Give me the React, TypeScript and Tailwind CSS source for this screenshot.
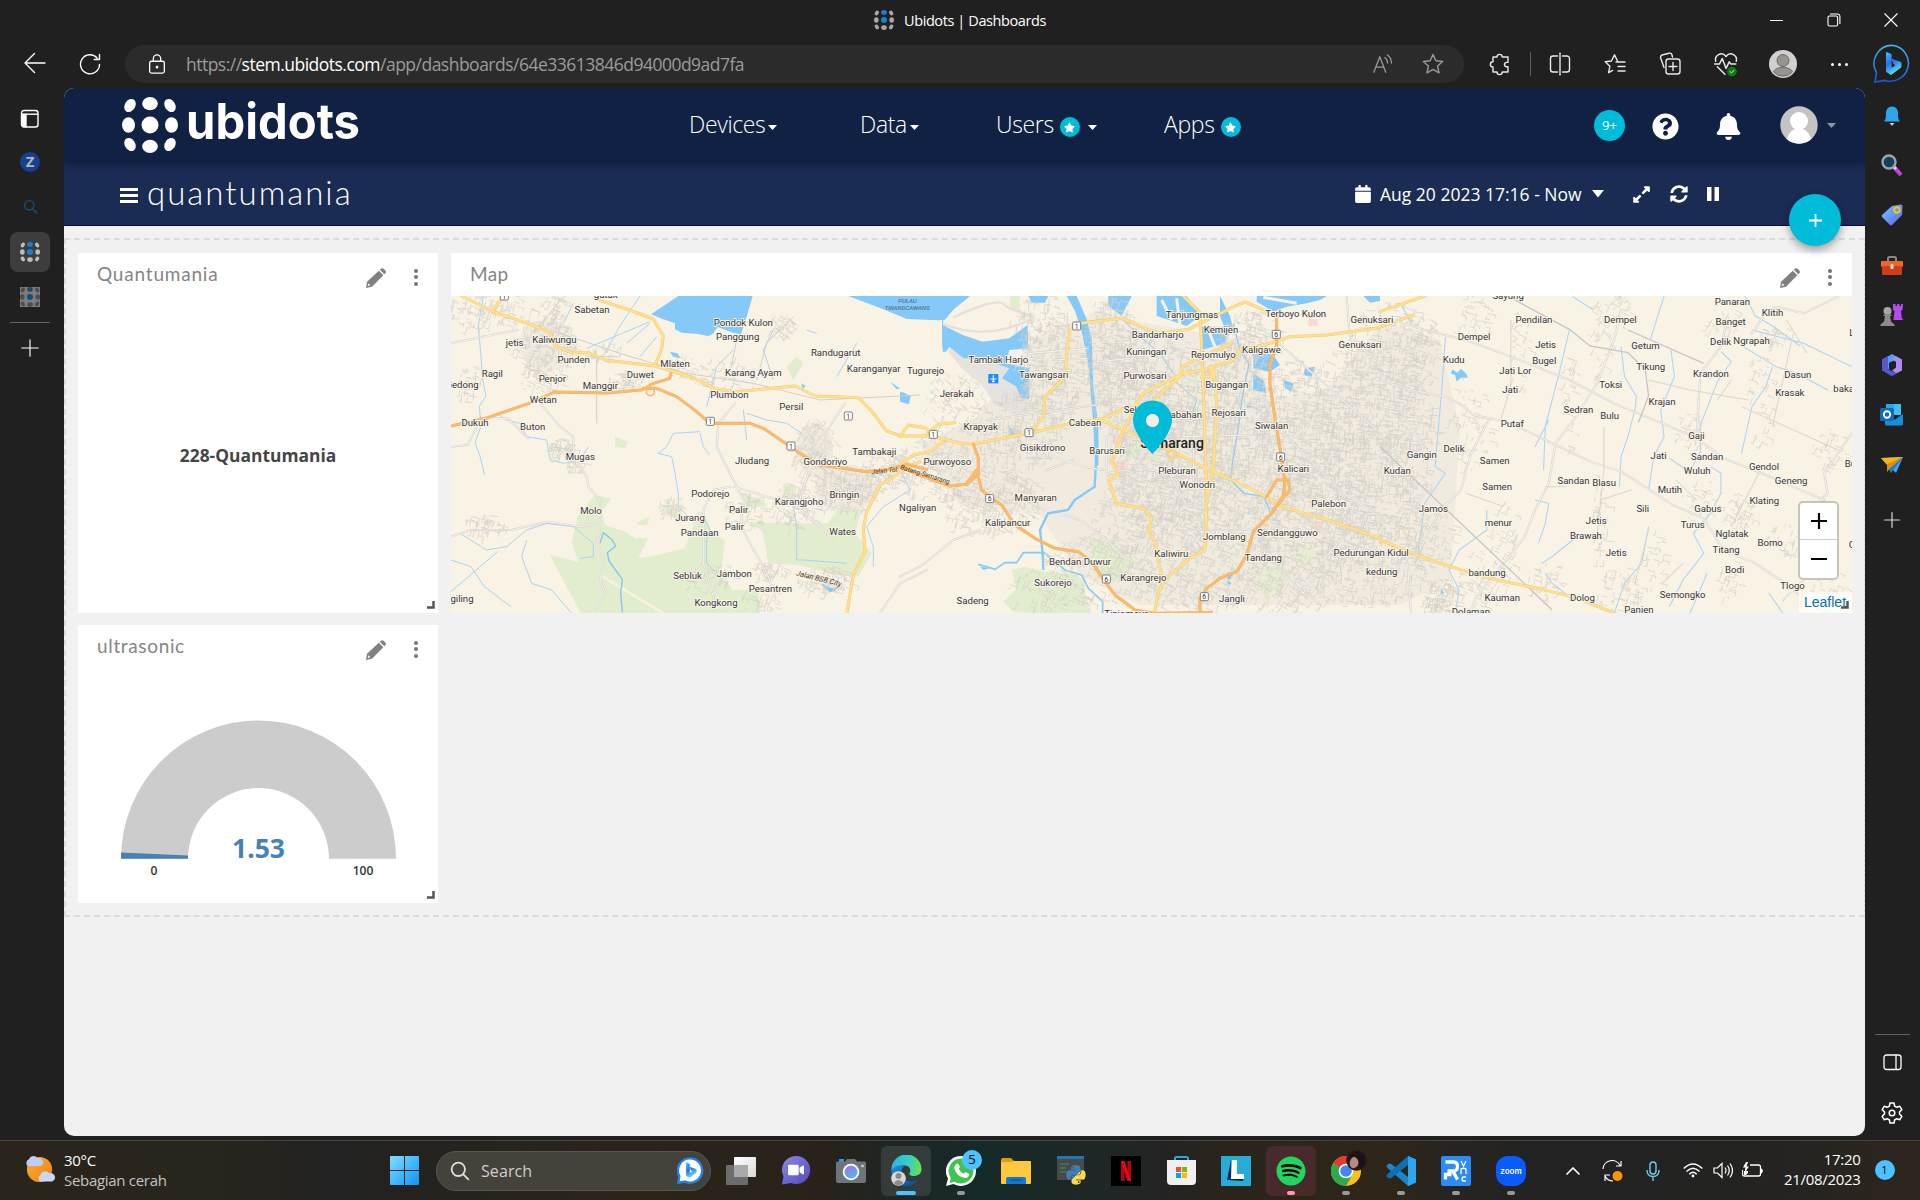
import React from "react";
import {
  FaCalendar, FaExpandAlt, FaBell, FaQuestionCircle, FaStar,
  FaSpotify, FaPython, FaSyncAlt, FaVideo,
} from "react-icons/fa";

/* ---------- shared pieces ---------- */

function UbiDots({ className, side, mid, low = side }: { className: string; side: string; mid: string; low?: string }) {
  return (
    <svg className={className} viewBox="0 0 56 56">
      <g fill={side}>
        <ellipse cx="8" cy="8.5" rx="5.2" ry="7" transform="rotate(32 8 8.5)" />
        <ellipse cx="48" cy="8.5" rx="5.2" ry="7" transform="rotate(-32 48 8.5)" />
        <ellipse cx="6.5" cy="28" rx="6.5" ry="7.7" />
        <ellipse cx="49.5" cy="28" rx="6.5" ry="7.7" />
        <ellipse cx="8" cy="47.5" rx="5.2" ry="7" transform="rotate(-32 8 47.5)" />
        <ellipse cx="48" cy="47.5" rx="5.2" ry="7" transform="rotate(32 48 47.5)" />
      </g>
      <ellipse cx="28" cy="6.7" rx="7.8" ry="6.6" fill={mid} />
      <circle cx="28" cy="28" r="8.5" fill={mid} />
      <ellipse cx="28" cy="49.3" rx="7.8" ry="6.6" fill={low} />
    </svg>
  );
}

function Line({ children, size = 24, color = "#e8e8e8", w = 1.4, className = "" }: { children: React.ReactNode; size?: number; color?: string; w?: number; className?: string }) {
  return (
    <svg className={className} width={size} height={size} viewBox="0 0 24 24" fill="none" stroke={color} strokeWidth={w} strokeLinecap="round" strokeLinejoin="round">
      {children}
    </svg>
  );
}

function BingMark({ id }: { id: string }) {
  return (
    <>
      <defs>
        <linearGradient id={id} x1="0" y1="0" x2="0.4" y2="1">
          <stop offset="0" stopColor="#37bdff" />
          <stop offset="0.5" stopColor="#2a6cf0" />
          <stop offset="1" stopColor="#5ce1e6" />
        </linearGradient>
      </defs>
      <path d="M14 8.500l4.600 1.800v14.200l5.200-3.300-2.600-1.400-1.800-4.600 9 3.300v4.600L18.600 30.500 14 27.600z" fill={`url(#${id})`} stroke={`url(#${id})`} strokeWidth="1" strokeLinejoin="round" />
    </>
  );
}

/* ---------- browser chrome ---------- */

function TitleBar() {
  return (
    <div className="flex h-[45px] items-start">
      <div className="ml-[874px] flex h-10 w-[873px] items-center gap-[10px] text-[14.5px] text-white">
        <UbiDots className="h-5 w-5" side="#a8a8a8" mid="#1583d2" low="#a8a8a8" />
        <span className="mt-px whitespace-nowrap tracking-[-0.4px]">Ubidots | Dashboards</span>
      </div>
      <div className="flex h-10 items-center text-white">
        <span className="flex w-[58px] justify-center"><span className="h-px w-[13px] bg-white" /></span>
        <span className="flex w-[57px] justify-center">
          <svg width="14" height="14" viewBox="0 0 14 14" fill="none" stroke="#fff" strokeWidth="1.1"><rect x="1" y="3" width="9.6" height="10" rx="1.5" /><path d="M3 1h7.500a2.400 2.400 0 0 1 2.400 2.400V11" /></svg>
        </span>
        <span className="flex w-[58px] justify-center">
          <svg width="14" height="14" viewBox="0 0 14 14" stroke="#fff" strokeWidth="1.1"><path d="M.5.5l13 13M13.500.5l-13 13" /></svg>
        </span>
      </div>
    </div>
  );
}

function ToolBar() {
  return (
    <div className="flex h-[43px] items-start">
      <div className="flex h-[38px] w-[125px] items-center">
        <span className="ml-[23px] flex w-6 justify-center"><Line size={24} w={1.4} color="#fff"><path d="M22 11H2.500M11.500 1.500l-9.500 9.500 9.500 9.500" /></Line></span>
        <span className="ml-[31px] flex w-6 justify-center"><Line size={24} w={1.4} color="#fff"><path d="M21.500 12.500a9.500 9.500 0 1 1-2.300-6.400M21.500 2.500v5h-5.300" /></Line></span>
      </div>
      <div className="flex h-[38px] w-[1339px] items-center rounded-full bg-[#2b2b2b]">
        <Line className="ml-[21px]" size={22} color="#fff"><rect x="4" y="9" width="16" height="13" rx="2" /><path d="M8 9V6a4 4 0 0 1 8 0v3" /><circle cx="12" cy="15.500" r=".8" fill="#fff" /></Line>
        <span className="ml-[18px] w-[1167px] whitespace-nowrap text-[17.5px] tracking-[-0.51px] text-[#9b9b9b]">
          https://<span className="text-white">stem.ubidots.com</span>/app/dashboards/64e33613846d94000d9ad7fa
        </span>
        <Line className="ml-[19px]" size={22} color="#9a9a9a"><path d="M2 21L8.500 4 15 21M4.300 15.500h8.500M14 5c2 1.500 3 3.500 3 6M16.500 2c3 2 4.700 5 4.700 9" /></Line>
        <Line className="ml-[27px]" size={24} color="#9a9a9a"><path d="M12 2.500l2.900 6.200 6.700.8-5 4.600 1.400 6.700-6-3.400-6 3.400 1.400-6.700-5-4.600 6.700-.8z" /></Line>
      </div>
      <div className="flex h-[38px] items-center">
        <Line className="ml-[24px]" size={24}><path d="M9 5a2.600 2.600 0 0 1 5.200 0H20v5.400h-1.300a2.200 2.200 0 0 0 0 4.400H20V20h-5.800a2.600 2.600 0 0 1-5.200 0H5v-5a2.600 2.600 0 0 1 0-5.200V5z" /></Line>
        <span className="ml-[18px] h-6 w-px bg-[#5c5c5c]" />
        <Line className="ml-[17px]" size={24}><path d="M9.500 4H5a2.500 2.500 0 0 0-2.500 2.500v11A2.500 2.500 0 0 0 5 20h4.500M14.500 4H19a2.500 2.500 0 0 1 2.500 2.500v11A2.500 2.500 0 0 1 19 20h-4.500M12 1v22" /></Line>
        <Line className="ml-[31px]" size={24}><path d="M14.500 9L11.500 2.800 8.500 9l-6.300.8 4.700 4.400-1.300 6.500 4-2.300M13 10h9M15 14.500h7M15 19h7" /></Line>
        <Line className="ml-[31px]" size={24}><path d="M6 15.500L2.500 5.500A2.500 2.500 0 0 1 4 3l7-1.800A2.500 2.500 0 0 1 14 3l.5 2M8 20V9.500A2.500 2.500 0 0 1 10.500 7h9A2.500 2.500 0 0 1 22 9.500v10a2.500 2.500 0 0 1-2.500 2.500h-9A2.500 2.500 0 0 1 8 19.500M15 10.500v8M11 14.500h8" /></Line>
        <Line className="ml-[31px]" size={26}><path d="M2.500 9.500C1 4 8 0 12 5c4-5 11-1 9.500 4.500M1.500 12H6l2.500-5 3.500 9 3-6 1.500 2H21M4 14.500l7 7" /><circle cx="17.500" cy="19" r="4.500" fill="#107c10" stroke="none" /><path d="M15.700 19l1.300 1.300 2.300-2.500" strokeWidth="1" stroke="#8fd08f" /></Line>
        <svg className="ml-[30px]" width="28" height="28" viewBox="0 0 28 28">
          <circle cx="14" cy="14" r="14" fill="#d2d0ce" />
          <path d="M4.500 22a9.600 5.500 0 0 1 19 0A13 13 0 0 1 4.500 22z" fill="#97948f" stroke="#5b5a58" strokeWidth=".8" />
          <circle cx="14" cy="10.500" r="6" fill="#97948f" stroke="#5b5a58" strokeWidth=".8" />
        </svg>
        <span className="ml-[34px] flex w-[17px] justify-between"><i className="size-[3px] rounded-full bg-white" /><i className="size-[3px] rounded-full bg-white" /><i className="size-[3px] rounded-full bg-white" /></span>
        <svg className="ml-[25px]" width="40" height="40" viewBox="0 0 40 40">
          <defs><linearGradient id="bubble" x1="0" y1="0" x2="0" y2="1"><stop offset="0" stopColor="#45b8e6" /><stop offset="1" stopColor="#1758d8" /></linearGradient></defs>
          <path d="M20.500 1.500A18 18 0 1 1 12 36.400L2 38l1.500-9.500A18 18 0 0 1 20.500 1.500z" fill="none" stroke="url(#bubble)" strokeWidth="1.600" />
          <g transform="translate(-.5 0)"><BingMark id="bingTop" /></g>
        </svg>
      </div>
    </div>
  );
}

function LeftRail() {
  return (
    <aside className="flex w-16 flex-col pl-[10px]">
      <div className="flex h-[51px] w-[39px] items-center justify-center pt-[11px]">
        <svg width="20" height="20" viewBox="0 0 20 20" fill="none" stroke="#fff" strokeWidth="1.400"><rect x="1.500" y="1.500" width="16.500" height="16.500" rx="2.500" /><path d="M1.500 5.200h16.500" /><path d="M2 5.500h4v12H3.500L2 16z" fill="#fff" /></svg>
      </div>
      <div className="flex h-[45px] w-10 items-center justify-center">
        <span className="flex size-5 items-center justify-center rounded-full bg-[#173f92] text-[15px] font-bold text-[#b4b4b4]">Z</span>
      </div>
      <div className="flex h-[48px] w-10 items-center justify-center pb-[3px]"><Line size={15} w={2.2} color="#1c4f78"><circle cx="10" cy="10" r="7.500" /><path d="M15.500 15.500l6.500 6.500" /></Line></div>
      <div className="flex h-[40px] w-10 items-center justify-center rounded-lg bg-[#3d3d3d]"><UbiDots className="h-5 w-5" side="#bdbdbd" mid="#1583d2" low="#bdbdbd" /></div>
      <div className="flex h-[50px] w-10 items-center justify-center"><span className="size-5 bg-[#7d7d7d]"><UbiDots className="h-5 w-5" side="#4d4d4d" mid="#174b7c" low="#4d4d4d" /></span></div>
      <div className="h-px w-10 bg-[#666]" />
      <div className="flex h-[49px] w-[39px] items-center justify-center"><Line size={18} w={1.5} color="#fff"><path d="M12 1v22M1 12h22" /></Line></div>
    </aside>
  );
}

function RightRail() {
  const cell = "flex w-full items-center justify-center";
  return (
    <aside className="flex w-[54px] flex-col">
      <div className={cell + " h-[56px]"}>
        <svg width="22" height="22" viewBox="0 0 22 22"><path d="M11 1.500c4 0 6 3 6 6.500 0 5 .5 6.500 2 8.500H3c1.500-2 2-3.500 2-8.500 0-3.500 2-6.500 6-6.500z" fill="#2aa7ea" /><path d="M8.500 18h5l-2.500 3z" fill="#c9c9c9" /></svg>
      </div>
      <div className={cell + " h-[41px]"}>
        <svg width="24" height="24" viewBox="0 0 24 24"><path d="M14 14l7 8" stroke="#c73fe8" strokeWidth="4" /><path d="M12 12l4 4" stroke="#ddd" strokeWidth="3" /><circle cx="9" cy="9" r="6.500" fill="#12405a" stroke="#9da3a6" strokeWidth="2.400" /></svg>
      </div>
      <div className={cell + " h-[60px]"}>
        <svg width="24" height="24" viewBox="0 0 24 24"><defs><linearGradient id="tag" x1="0" y1="0" x2="1" y2="1"><stop offset="0" stopColor="#7fc4ff" /><stop offset="1" stopColor="#5467e8" /></linearGradient></defs><path d="M12 3l9-1.500q1.500 0 1.500 1.500L22 12 12 22q-1 .8-2 0L2 14q-.8-1 0-2z" fill="url(#tag)" /><circle cx="17" cy="7" r="2.700" fill="none" stroke="#f2c811" strokeWidth="2" /></svg>
      </div>
      <div className={cell + " h-[42px]"}>
        <svg width="24" height="24" viewBox="0 0 24 24"><path d="M8 7V4.500Q8 3 9.500 3h5Q16 3 16 4.500V7" fill="none" stroke="#888" strokeWidth="2" /><rect x="1" y="7" width="22" height="6" rx="1" fill="#f2642d" /><rect x="2" y="12" width="20" height="9" rx="1.500" fill="#cf3f17" /><rect x="10.500" y="10" width="3" height="5" rx="1" fill="#ddd" /></svg>
      </div>
      <div className={cell + " h-[56px]"}>
        <svg width="24" height="24" viewBox="0 0 24 24"><path d="M13 1h2.500v2H17V1h2.500v2H21V1h2l-.5 6-1.500 1 .8 7 1.500 2H13.500l1-9L13 7z" fill="#b44af0" /><circle cx="7.500" cy="8" r="4" fill="#a6a6a6" /><path d="M3.500 11.500h8v1.500H10l1 5.500 3.500 3V23h-14v-1.500l3.500-3L5 13H3.500z" fill="#8c8c8c" /></svg>
      </div>
      <div className={cell + " h-[44px]"}>
        <svg width="24" height="24" viewBox="0 0 24 24"><path d="M12 1l9 5.200v5.500l-7-4-5 2.800V16l-6.500 2V6.500z" fill="#5a9cf0" /><path d="M2 6.500L8 3v13l6 3.500L21 12v6l-9 5.200-10-5.700z" fill="#5b57c9" /><path d="M15.500 3L22 6.500v11L16 20l-4-2.500 4-3V8L12 6z" fill="#b18cf0" /><path d="M9 10l3-1.700 3.500 2v4L12 16.300 9 14.500z" fill="#20202a" /></svg>
      </div>
      <div className={cell + " h-[56px]"}>
        <svg width="24" height="24" viewBox="0 0 24 24"><path d="M6 1h15v11H6z" fill="#28a8ea" /><path d="M14 1h7v11h-7z" fill="#50d0ff" opacity=".6" /><path d="M5 11l9 6 9-6v10q0 1.500-1.500 1.500H6.500Q5 22.500 5 21z" fill="#1490df" /><rect x="0" y="5" width="14" height="13" rx="1.500" fill="#0f6cbd" /><circle cx="7" cy="11.500" r="3.200" fill="none" stroke="#fff" strokeWidth="1.900" /></svg>
      </div>
      <div className={cell + " h-[44px]"}>
        <svg width="24" height="24" viewBox="0 0 24 24"><path d="M1 5l22-1-7 16-5-5z" fill="#3ea6f2" /><path d="M23 4L7 13l4 7 3-4z" fill="#1d7ad0" /><path d="M1 5l22-1L7 12z" fill="#f7b519" /><path d="M7 11v8l3-3.500L23 4z" fill="#e08c10" /></svg>
      </div>
      <div className={cell + " h-[66px]"}><Line size={16} w={1.8} color="#dcdcdc"><path d="M12 1v22M1 12h22" /></Line></div>
      <div className="mt-auto">
        <div className="ml-[10px] h-px w-[35px] bg-[#5f5f5f]" />
        <div className={cell + " h-[55px]"}><svg width="19" height="17" viewBox="0 0 19 17" fill="none" stroke="#fff" strokeWidth="1.300"><rect x="1" y="1" width="17" height="14.500" rx="2.500" /><path d="M13 1v14.500" /></svg></div>
        <div className={cell + " h-[46px]"}><Line size={24} w={1.5} color="#fff"><path d="M10 2h4l.6 3 2.200 1.300 3-1 2 3.400L19.500 11v2l2.300 2.300-2 3.400-3-1L14.600 19l-.6 3h-4l-.6-3-2.200-1.300-3 1-2-3.400L4.500 13v-2L2.200 8.700l2-3.400 3 1L9.400 5z" /><circle cx="12" cy="12" r="2.800" /></Line></div>
      </div>
    </aside>
  );
}

/* ---------- dashboard header ---------- */

function Caret({ className = "" }: { className?: string }) {
  return <svg className={className} width="9" height="5" viewBox="0 0 9 5"><path d="M0 0h9L4.500 5z" fill="currentColor" /></svg>;
}

function StarBadge() {
  return <span className="flex size-5 items-center justify-center rounded-full bg-[#00bcd9] text-[11px] text-white"><FaStar /></span>;
}

function NavBar() {
  const item = "flex h-[74px] items-center whitespace-nowrap pb-[2px] text-[23px] font-light tracking-[-0.35px] text-white";
  return (
    <nav className="relative z-10 flex h-[75px] items-center bg-[#112144] shadow-[0_2px_8px_rgba(0,0,0,0.3)]">
      <UbiDots className="mb-px ml-[58px] h-[56px] w-[56px]" side="#fff" mid="#fff" />
      <svg className="mb-[7px] ml-[8px]" width="178" height="50" viewBox="0 0 178 50">
        <text x="0" y="42" textLength="174" fontFamily="Inter, sans-serif" fontWeight="700" fontSize="49" fill="#fff" lengthAdjust="spacingAndGlyphs">ubidots</text>
      </svg>
      <div className={item + " ml-[325px] w-[171px]"}>Devices<Caret className="mt-[6px] ml-[3px]" /></div>
      <div className={item + " w-[136px]"}>Data<Caret className="mt-[6px] ml-[3px]" /></div>
      <div className={item + " w-[168px]"}>Users<span className="mt-[5px] ml-[6px]"><StarBadge /></span><Caret className="mt-[6px] ml-2" /></div>
      <div className={item + " w-[430px]"}>Apps<span className="mt-[5px] ml-[6px]"><StarBadge /></span></div>
      <span className="flex size-[31px] shrink-0 items-center justify-center rounded-full bg-[#00bcd9] text-[13px] text-white">9+</span>
      <FaQuestionCircle className="mt-[2px] ml-[27px] size-[27px] shrink-0 text-white" />
      <FaBell className="mt-[2px] ml-[36px] size-[27px] shrink-0 text-white" />
      <svg className="mb-[2px] ml-[38px] shrink-0" width="38" height="38" viewBox="0 0 38 38"><clipPath id="avatar"><circle cx="19" cy="19" r="18.700" /></clipPath><g clipPath="url(#avatar)"><rect width="38" height="38" fill="#c4c4c4" /><circle cx="19" cy="15" r="9" fill="#fff" /><path d="M6 38q1-12 9-15h8q8 3 9 15z" fill="#fff" /></g></svg>
      <Caret className="ml-[9px] text-[#8a93a8]" />
    </nav>
  );
}

function SubBar() {
  return (
    <div className="relative flex h-[63px] items-center border-b border-[#060b3c] bg-[#1a2b54] text-white">
      <span className="mt-[3px] ml-[56px] flex w-[18px] flex-col gap-[3px]"><i className="h-[3px] bg-white" /><i className="h-[3px] bg-white" /><i className="h-[3px] bg-white" /></span>
      <h1 className="mb-[2px] ml-[9px] w-[1207px] font-['Lato'] text-[33px] font-light tracking-[2px]">quantumania</h1>
      <FaCalendar className="size-[18px]" />
      <span className="ml-[8px] w-[203px] whitespace-nowrap text-[17.5px] tracking-[0px]">Aug 20 2023 17:16 - Now</span>
      <svg className="ml-[9px]" width="12" height="8" viewBox="0 0 12 8"><path d="M0 0h12L6 7.500z" fill="#fff" /></svg>
      <FaExpandAlt className="ml-[28px] size-[19px]" />
      <FaSyncAlt className="ml-[19px] size-[18px]" />
      <svg className="ml-[19px]" width="12" height="14" viewBox="0 0 12 14"><path d="M0 0h4.500v14H0zM7.500 0H12v14H7.500z" fill="#fff" /></svg>
      <button className="absolute top-[31px] right-[24px] z-20 flex size-[52px] items-center justify-center rounded-full bg-[#00bcd9] shadow-[0_4px_8px_rgba(0,0,0,0.35)]">
        <svg width="13" height="13" viewBox="0 0 13 13" stroke="#fff" strokeWidth="1.800"><path d="M6.500 0v13M0 6.500h13" /></svg>
      </button>
    </div>
  );
}

/* ---------- map ---------- */

type Label = [string, number, number];

const WEST: Label[] = [["gatak", 497, 55], ["Sabetan", 456, 98], ["Kaliwungu", 343, 188], ["jetis", 224, 197], ["Punden", 401, 248], ["Ragil", 157, 291], ["Gedong", 66, 324], ["Penjor", 337, 307], ["Manggir", 481, 326], ["Duwet", 601, 294], ["Mlaten", 705, 261], ["Wetan", 310, 368], ["Dukuh", 105, 438], ["Buton", 278, 449], ["Mugas", 421, 539], ["Molo", 453, 703], ["giling", 66, 966], ["Pondok Kulon", 910, 137], ["Panggung", 893, 181], ["Karang Ayam", 940, 287], ["Randugarut", 1187, 227], ["Karanganyar", 1301, 276], ["Plumbon", 868, 355], ["Persil", 1054, 389], ["Jludang", 936, 552], ["Gondoriyo", 1156, 556], ["Tambakaji", 1303, 525], ["Podorejo", 811, 651], ["Jurang", 750, 722], ["Pandaan", 779, 767], ["Palir", 896, 698], ["Palir", 883, 750], ["Karangjoho", 1077, 675], ["Bringin", 1213, 654], ["Wates", 1208, 765], ["Sebluk", 743, 898], ["Jambon", 883, 892], ["Pesantren", 991, 935], ["Kongkong", 828, 978]];
const CENTER: Label[] = [["Tugurejo", 77, 281], ["Jerakah", 170, 351], ["Krapyak", 242, 450], ["Tambak Harjo", 295, 248], ["Tawangsari", 431, 294], ["Purwoyoso", 142, 554], ["Gisikdrono", 428, 514], ["Ngaliyan", 53, 692], ["Manyaran", 407, 662], ["Kalipancur", 323, 737], ["Cabean", 555, 438], ["Barusari", 621, 521], ["Bandarharjo", 773, 173], ["Kuningan", 739, 224], ["Purwosari", 735, 296], ["Tanjungmas", 876, 115], ["Kemijen", 963, 160], ["Rejomulyo", 940, 235], ["Kaligawe", 1084, 219], ["Terboyo Kulon", 1187, 110], ["Genuksari", 1416, 130], ["Genuksari", 1380, 205], ["Bugangan", 980, 325], ["Rejosari", 986, 409], ["Siwalan", 1115, 446], ["Kalicari", 1180, 575], ["Pleburan", 831, 581], ["Wonodri", 892, 625], ["Sel", 691, 398], ["abahan", 859, 414], ["Palebon", 1286, 680], ["Jomblang", 973, 780], ["Sendangguwo", 1162, 767], ["Kaliwiru", 814, 831], ["Tandang", 1090, 842], ["Bendan Duwur", 540, 856], ["Sukorejo", 459, 919], ["Karangrejo", 730, 903], ["Sadeng", 218, 971], ["Jangli", 996, 967], ["Tinjomoyo", 680, 1010]];
const EAST: Label[] = [["Sayung", 372, 58], ["Pendilan", 447, 129], ["Dempel", 698, 130], ["Dempel", 273, 179], ["Jetis", 481, 203], ["Bugel", 477, 251], ["Kudu", 214, 250], ["Jati Lor", 393, 283], ["Jati", 378, 338], ["Getum", 771, 206], ["Tikung", 786, 270], ["Toksi", 670, 324], ["Krajan", 819, 374], ["Bulu", 667, 416], ["Sedran", 576, 398], ["Putaf", 384, 441], ["Delik", 215, 516], ["Gangin", 121, 533], ["Kudan", 50, 583], ["Samen", 333, 552], ["Samen", 340, 631], ["Jamos", 155, 695], ["menur", 344, 737], ["Sandan", 562, 611], ["Blasu", 651, 618], ["Jetis", 628, 731], ["Brawah", 598, 776], ["Jetis", 686, 828], ["bandung", 311, 888], ["Kauman", 355, 963], ["Dolog", 588, 963], ["Dolaman", 264, 1006], ["Panjen", 752, 1000], ["Semongko", 879, 954], ["Panaran", 1023, 75], ["Banget", 1018, 135], ["Klitih", 1140, 107], ["Delik", 989, 195], ["Ngrapah", 1079, 192], ["Krandon", 961, 292], ["Dasun", 1213, 295], ["Krasak", 1190, 347], ["bakalan", 1365, 335], ["Gaji", 919, 476], ["Jati", 809, 537], ["Sandan", 950, 540], ["Wuluh", 921, 581], ["Gendol", 1115, 571], ["Geneng", 1194, 613], ["Mutih", 842, 639], ["Klating", 1116, 671], ["Sili", 763, 695], ["Gabus", 952, 695], ["Turus", 908, 745], ["Nglatak", 1022, 771], ["Titang", 1005, 820], ["Bomo", 1133, 798], ["Bodi", 1030, 880], ["Tlogo", 1198, 927], ["Bu", 1366, 562], ["Pedurungan Kidul", -26, 827], ["kedung", 5, 886], ["Gu", 1378, 805], ["La", 1378, 168]];

function rng(seed: number) {
  let s = seed;
  return () => {
    s = (s * 16807) % 2147483647;
    return s / 2147483647;
  };
}

/* Short perpendicular street segments scattered over an ellipse. */
function streets(cx: number, cy: number, rx: number, ry: number, n: number, seed: number, tilt = 0.12) {
  const r = rng(seed * 7919 + 13);
  let d = "";
  for (let i = 0; i < n; i++) {
    const a = r() * Math.PI * 2;
    const q = Math.pow(r(), 0.6);
    const x = cx + Math.cos(a) * rx * q;
    const y = cy + Math.sin(a) * ry * q;
    const t = tilt + (r() > 0.5 ? Math.PI / 2 : 0);
    const l = 2 + r() * 7;
    const dx = Math.cos(t) * l;
    const dy = Math.sin(t) * l;
    d += `M${x.toFixed(1)} ${y.toFixed(1)}l${dx.toFixed(1)} ${dy.toFixed(1)}`;
    if (r() > 0.5) d += `l${(-dy / 2).toFixed(1)} ${(dx / 2).toFixed(1)}`;
  }
  return d;
}

/* cx, cy, rx, ry, count, tilt */
const TOWNS: number[][] = [
  [490, 310, 45, 20, 130, 0.3], [545, 345, 32, 30, 200, 0.2], [553, 310, 12, 22, 60, 0.3], [470, 385, 12, 22, 40, 0.1], [560, 448, 12, 10, 70, 0.2], [575, 465, 9, 8, 30, 0.2],
  [540, 380, 25, 16, 50, 0.3], [630, 380, 22, 10, 50, 0.1], [595, 350, 30, 10, 40, 0.3], [680, 365, 20, 12, 40, 0.4], [725, 375, 35, 20, 60, 0.3], [783, 325, 14, 12, 60, 0.6], [485, 525, 22, 12, 60, 0.2],
  [815, 450, 22, 32, 180, 0.5], [848, 490, 30, 24, 220, 0.2], [795, 505, 22, 24, 140, 0.3], [745, 510, 22, 18, 60, 0.1], [708, 575, 28, 14, 50, 0.3], [770, 570, 20, 9, 60, 0.4], [825, 580, 28, 14, 120, 0.3], [760, 600, 20, 12, 40, 0.3],
  [670, 505, 12, 10, 40, 0.2], [885, 470, 25, 22, 140, 0.3], [955, 400, 30, 30, 120, 0.6], [935, 465, 40, 35, 240, 0.3], [990, 500, 50, 35, 420, 0.3], [1015, 430, 50, 40, 380, 0.1],
  [1050, 370, 35, 50, 420, 0.1], [1040, 320, 30, 25, 100, 0.1], [1110, 350, 30, 55, 380, 0.15], [1150, 390, 60, 60, 900, 0.15], [1170, 460, 65, 60, 950, 0.2], [1150, 530, 60, 60, 700, 0.3], [1230, 410, 40, 70, 700, 0.1], [1230, 520, 55, 60, 650, 0.3], [1250, 340, 30, 30, 240, 0.2], [1295, 430, 40, 70, 650, 0.1], [1310, 510, 60, 60, 700, 0.2], [1360, 400, 50, 60, 560, 0.1], [1370, 480, 50, 60, 560, 0.1], [1370, 560, 60, 45, 450, 0.1], [1410, 440, 28, 60, 260, 0.1], [1090, 570, 50, 35, 200, 0.4], [1200, 590, 60, 25, 240, 0.4], [1290, 585, 50, 30, 240, 0.5], [1050, 590, 40, 25, 110, 0.4],
  [1390, 345, 40, 45, 240, 0.1], [1420, 350, 22, 40, 150, 0.4], [1475, 315, 18, 25, 45, 0.3], [1440, 600, 18, 22, 180, 0.2], [1425, 530, 30, 40, 150, 0.3], [1470, 420, 22, 50, 70, 0.3], [1480, 580, 30, 30, 80, 0.4], [1505, 540, 14, 40, 50, 0.4],
  [1545, 580, 16, 22, 45, 0.2], [1620, 590, 22, 26, 80, 0.2], [1600, 520, 10, 50, 50, 0.1], [1600, 340, 12, 40, 45, 0.5], [1620, 310, 12, 18, 30, 0.5], [1570, 400, 10, 60, 40, 0.4], [1655, 560, 10, 30, 30, 0.2], [1700, 500, 18, 24, 35, 0.3], [1740, 515, 16, 24, 60, 0.4], [1690, 430, 16, 20, 40, 0.3], [1760, 400, 14, 50, 50, 0.4], [1830, 450, 18, 22, 50, 0.3], [1725, 320, 20, 20, 35, 0.5], [1775, 335, 18, 10, 30, 0.3], [1790, 540, 25, 20, 30, 0.3], [1830, 590, 18, 20, 30, 0.5], [1730, 580, 14, 20, 30, 0.3], [1520, 350, 10, 40, 35, 0.4],
];

const MESH = TOWNS.map((t, i) => streets(t[0], t[1], t[2], t[3], Math.round(t[4] * 0.85), i + 1, t[5])).join("");

function Road({ d, kind }: { d: string; kind: "toll" | "main" | "minor" }) {
  const c = { toll: ["#f0ac5c", "#fabb6d", 9, 7], main: ["#efc873", "#ffe08c", 9, 6.5], minor: ["#cfccc9", "#f4f1ec", 6, 3.5] }[kind] as [string, string, number, number];
  return (
    <g fill="none" strokeLinejoin="round" strokeLinecap="round">
      <path d={d} stroke={c[0]} strokeWidth={c[2]} />
      <path d={d} stroke={c[1]} strokeWidth={c[3]} />
    </g>
  );
}

function Shield({ x, y, n }: { x: number; y: number; n: string }) {
  return (
    <g>
      <rect x={x - 12} y={y - 12} width="24" height="24" rx="3" fill="#fff" stroke="#666" strokeWidth="2.500" />
      <text x={x} y={y + 8} textAnchor="middle" fontSize="21" fill="#333" fontFamily="Roboto, sans-serif">{n}</text>
    </g>
  );
}

function Labels({ items, ox, sx }: { items: Label[]; ox: number; sx: number }) {
  return (
    <g className="[paint-order:stroke]" fontFamily="Roboto, sans-serif" fontSize="9.600" fill="#34343a" textAnchor="middle" stroke="#fbf6ea" strokeWidth="1.800" strokeLinejoin="round">
      {items.map(([t, x, y], i) => <text key={i} x={ox + x * sx} y={280 + y / 3}>{t}</text>)}
    </g>
  );
}

function CityMap() {
  return (
    <svg width="1401" height="317" viewBox="451 296 1401 317" className="block">
      <rect x="451" y="296" width="1401" height="317" fill="#f9f3e5" />

      <g transform="translate(440 280) scale(.33333)">
        <g fill="#e2edcd">
          <path d="M330 825l85 20-20-60 20-80 50-60 50 10-30 40 10 40 60 20 30 20 40 0-30 60 60-10 80-20 40-110 20 5 20 60 40 20-10 90 30 60 80 0 10 160H470z" />
          <path d="M900 640l70 20 10 20-60 0zM915 725l180 5 70 0 40-60 60 20-20 70 50 60-40 70-60-5-120-30-90-5-10-60-10-40zM525 470l40 15-10 20-30-5zM595 725l35-15-10 25-30 0zM673 675l50 20 10 30-30-10-30-20zM1030 610l40 10-10 50-30-10zM780 300l20-10-10 30zM1040 260l30-30 20 20-30 50z" />
        </g>
        <path d="M480 885l190 115" stroke="#f9f2e4" strokeWidth="7" />
        <g fill="#84c9f8">
          <path d="M633 103L715 48h223l-13 45-22 70-25-5-45-17-14 20-14 8-30-7-50-4-20-10v-18l-37-13z" />
          <path d="M1225 48l105 40 70 29 95 4 20-2 25-30 50-41z" />
          <path d="M690 215l22 5 10 14-22-3zM1145 910l30 15 20-5-10 12-15 5-20-17zM1385 335l27 12-5 25-22-12zM1350 305l30 20-10 3zM1083 310l14 8-8 8z" />
        </g>
        <g fill="none" stroke="#a9d3f3" strokeWidth="3">
          <path d="M130 48l-15 90 8 90 5 70 10 50-20 30 5 60-18 50 15 40 14 58" />
          <path d="M170 400l30 20 40 10 20 40 60 10 10 60 40 10 50-10 25-40" />
          <path d="M600 48l-60 90-50 90M440 205l190-80M560 190l70-60M600 230l50-60M400 70l-30 60" />
          <path d="M780 455l-80 5-20 40-25 20 40 10 10 50 10 60 0 40 40 40 40 0 15 30-10 30 0 70 40 40 60 5" />
          <path d="M780 460l10 40 20 25M1000 300l-30-90 30-60M1130 160l-30-10M800 380l30-120 50-50M1250 190l-60 100M910 390l10 90M920 400l60 20 60 10 60 40 60 90" />
          <path d="M33 840l60 20 40 60 80 60M60 760l80 50 60-10 60-50 60-20 80 10 60 50 0 40-40 5M33 935l140-120M260 780l-15 50 30 80 60 20 60 70" />
          <path d="M1060 680l10 60 0 100 20 0 130 10M1380 570l30 60-80 50-50 60 20 60 0 60" />
        </g>
        <path d="M480 790l10-32 25 20 12 20-25 20 5 25 40 55-5 40 5 60" fill="none" stroke="#7fc5f6" strokeWidth="4" />
      </g>

      <g fill="#e9e4d9" opacity=".55">
        <path d="M1040 335l60-25 30 10 110 20 25 60 60-10 60-70 55 20 20 90-10 150-50 25-260 0-60-30-40-60-80-10-40-60 60-30 40-60z" />
        <ellipse cx="845" cy="488" rx="30" ry="24" /><ellipse cx="547" cy="345" rx="28" ry="26" /><ellipse cx="815" cy="450" rx="18" ry="28" />
      </g>

      <g transform="translate(900 280) scale(.33333)">
        <path d="M145 195l50 10 60 40 60 0 75 120-5 30-40 10-60-30-40-60-60-50-40-50z" fill="#e6e3de" />
        <g fill="#e2edcd">
          <path d="M335 870l40-10 60 15 80 5 40 20 0 40 20 60H400l-60-5-30-30 40-40zM680 505l30-20 10 40-50 10zM395 365h30v25h-30zM330 48h30v40l-30 0zM755 520l25 5-5 20-20 0zM570 780l50-5 80 60-30 70-80-10z" />
          <path d="M1190 820l40-20 20 50-40 25zM1060 880l60-25 60 30-80 80-20-40z" opacity=".7" />
        </g>
        <g fill="#f8d9d4"><path d="M640 545l45-8 0 30-25 12-20-12zM1225 118h28v20h-28zM1245 725h22v28h-22zM775 705l18-5 0 20-18 0zM640 475l15-5 5 25-15 0z" /></g>
        <g fill="#84c9f8">
          <path d="M128 135l60 30 60 20 80-10 55-40 2 70-57 5-10 40 70 15v92l-25-3-15-35-42-24 22-30-88-30-50 0-42-35-10 15-10 0z" />
          <path d="M0 335l30 15-5 22-25-7zM325 435l20 25-15 5zM385 48h60l-10 20-40 0zM500 48h30l30 70 15 60 5 140 15 120 0 120-10-5-5-120-15-180-20-100-20-60zM625 48l70 0-30 60-40-30z" />
          <path d="M770 48h90l40 60-40 30-90-30zM905 140l80 0-10 50-70 20zM960 48l30 60 10 40-20 10-20-50zM1070 48h210l-20 12-40 10-60 10-40 15-50-30zM1060 215l60 10 20 30-30 20-50-10zM1060 280l30 20 10 40-40-10zM1150 300l30 10-5 25-20-10zM1215 265l30-5-10 30-25-5zM1040 375l22 6-22 2zM1390 48h50v15l-30 5z" />
          <path d="M985 875l12 10-8 15-8-5zM980 900l15 10-10 5zM240 860l30 5-20 5z" />
        </g>
        <path d="M785 60l30 60M830 55l10 80M925 150l20 50M1090 52l100 18" stroke="#f9f2e4" strokeWidth="9" />
        <g fill="none" stroke="#84c9f8">
          <path d="M592 480l-8 140-60 40-20 30-60 10-24 50 8 70 2 50" strokeWidth="7" />
          <path d="M435 818l-65 0-20 30-35 0-30 20-50-15M435 820l60 50 50 15 20 40 43 40 0 40" strokeWidth="5" />
          <path d="M1000 130l20 80 27 40-20 100-10 80-20 120-5 50 40 40 60 10 20 50" strokeWidth="4" />
          <path d="M660 110l60 60 60 50 40 60M820 300l70 60-20 60M128 200v-80" strokeWidth="3" />
        </g>
        <path d="M130 132q100 40 200 10t50-40-70-30-150 40" fill="none" stroke="#e3e1dd" strokeWidth="7" />
      </g>

      <g transform="translate(1380 280) scale(.34437 .33333)">
        <path d="M210 268l15 10 10-12 15 15 5 12-20 0-12 12-5-20-12-4zM178 925l8 15-10 5z" fill="#84c9f8" />
        <g fill="none" stroke="#a9d3f3" strokeWidth="3">
          <path d="M190 170l-10 150-20 240 30 20-60 90-20 150M60 70l30 60M550 150l-30 130-40 160-5 130M450 500l40-80M700 200l10 90 35 60-5 40-20 80-20 60-5 90M825 48l-40 130M845 210l10 80-40 100 10 80-30 60-15 100" />
          <path d="M560 50l60 40M840 535l60 40 30-60 0-80 50-130 40-60-30-30M1140 260l-20 60-40 60-30 140M1040 190l110 70 60 20 90 50M1080 150l150 40 140 70M1060 48l30 60 50 30 80 60M960 560l30 20 0 60-30 60-50 60 30 60-60 80-40 80M780 740l-20 110-50 60-30 90M450 660l40 10-10 60-20 60M310 690l0 60-80 60-30 60 30 60-10 60M480 880l20 30 50 40M560 780l-60 50-30 20M900 1000l50-120M1170 1000l-40-60" />
        </g>
      </g>

      <path d={MESH} fill="none" stroke="#d5d1c8" strokeWidth=".7" />

      <g transform="translate(440 280) scale(.33333)">
        <Road kind="minor" d="M33 500l50-5 40-80 80 0 60 60M300 370l60 70 40 30 0 60 40 60 5 30 35 40 0 100-10 20 20 60-10 60 15 40-25 50M33 770l60-20 120 0 110-25 100 15 45-10M885 370l-50 60-5 70 50 100 20 40 20 40-15 20 0 40 30 60 30 50 20 40 20 60M880 620l100 30 80 20 60 50 60 60M870 620l-50 10-30 60 0 160 30 100 0 50M1215 370l-60 90 0 60-50 60-30 90M33 190l200-40M1320 1000l60-90 80-40" />
        <path d="M360 160l180 60 200 60 200 30 200 50 300-15M470 430v-200h60M280 160l90-110M1060 110l-80 80-30 110M890 180l-20 100" fill="none" stroke="#d2cfcb" strokeWidth="3" />
        <Road kind="main" d="M65 48l90 45 115 40 60 25 15 40 50 20 50 0 50 22 150 18 60 18 60 20 60 30 60 10 180-18 60 30 130 5 40 40 45 60 45 15 70 0 40-35 50-5M160 90l30-40M480 62l80 25 80 30 30 50-5 40-20 50" />
        <Road kind="main" d="M1440 545l-40 20-80 50-40 80-10 50 5 70-35 70-20 120" />
        <Road kind="toll" d="M33 438l110-25 130-45 70-32 160 3 105-10 30-18 50-15 5-15M610 325l40 0 60 25 60 45 40 35 120 0 40 15 110 75 60 35 140 20 70-7 50-15 60 15" />
        <circle cx="631" cy="335" r="12" fill="none" stroke="#f7b767" strokeWidth="5" />
        <Shield x={193} y={48} n="1" /><Shield x={811} y={424} n="1" /><Shield x={1053} y={498} n="1" /><Shield x={1225} y={408} n="1" />
      </g>

      <g transform="translate(900 280) scale(.33333)">
        <Road kind="minor" d="M260 420l330-45M390 220l170-15M460 240l100-5M600 245l90-10M400 460l60 70 90 30 60 10M700 555l110 30 50 90 60 10M850 470l220-5M740 600l-60-30-60 10M1050 330l40 30 60 100 100 100 80 80 110 70M1070 130l100 90 260 230M0 890l60-30 100-80 80-30M480 700l60 20 80 60 60 60M840 750l200 0 40-10M720 480l0 80M880 470l0 130M1340 48l10 130 80 60M1150 880l60 60 60-100 60-70M620 470l0 100M440 570l80-30" />
        <Road kind="main" d="M0 470l25-35 50 8 30 28 80 20 40 0 180-35 115-28 90-12 60-30 30-3M540 130l-30 20-10 70-5 70-60 60-5 60-35 45M540 130l125-15 70 30 50 15 80-12 130-65 40-17 60 25 37 20M0 555l40-30 50-10 40-30" />
        <Road kind="main" d="M590 415l140 60 100 45 100 50 130 60 100 55 140 40 140 50M650 500l20-50 40-80 20-30 120-60 60-10 90-30 20-30 90-20 60-20 110-5 150-20 110-40M850 48l50 50 5 100 10 280 5 170-5 160-50 30-70 60-20 40-15 80M760 360l80-70 5-30 150-70M940 260l10 110-10 200-15 70M905 290l35 0-10-30M650 505l-15 40 20 40-30 15 25 70 80 15 25 30-10 40 20 30 10 60 15 60" />
        <circle cx="817" cy="523" r="13" fill="none" stroke="#f8cf72" strokeWidth="5" />
        <Road kind="toll" d="M0 560l70 30 80 28 50-5 35-30 0-50-15-40M200 610l30-40 15 60 30 25 30 20 40 60 60 40 60 30 70 10 40 30 40 60 30 40 60 45 60 10 130-2 40 0M1130 115l0 80-20 60 0 60 15 100 15 90 15 100-5 40-30 50-60 60-20 70-30 50-50 20-40 30-20 30 0 100M1100 650l30-50 35 0 5 30-50 60" />
        <Shield x={530} y={138} n="1" /><Shield x={1129} y={163} n="6" /><Shield x={100} y={463} n="1" /><Shield x={387} y={458} n="1" /><Shield x={1142} y={531} n="6" /><Shield x={269} y={656} n="6" /><Shield x={619} y={897} n="6" /><Shield x={913} y={950} n="6" />
        <g><rect x="265" y="282" width="30" height="28" fill="#1a8cff" /><path d="M280 286v20M271 297h18M276 305h8" stroke="#fff" strokeWidth="3.500" /></g>
        <g fill="#4a3520" fontFamily="Roboto, sans-serif" fontSize="20" fontStyle="italic">
          <text transform="translate(-85 583) rotate(-6)">Jalan Tol</text>
          <text transform="translate(0 567) rotate(17)">Batang-Semarang</text>
          <text transform="translate(-312 886) rotate(14)" fontSize="22">Jalan BSB City</text>
        </g>
        <g fill="#56728c" fontFamily="Roboto, sans-serif" fontSize="18" fontStyle="italic" fontWeight="500" textAnchor="middle"><text x="22" y="68">PULAU</text><text x="22" y="91">TIRANGCAWANG</text></g>
      </g>

      <g transform="translate(1380 280) scale(.34437 .33333)">
        <Road kind="minor" d="M0 110l130 40 120 30 180 70 120 50 130 70 140 60 90 40 90 65 120 50 170 75M0 300l90 30 100 20 40 20 40 35 100 20 140 70 100 50 90 30 90 60 60 40 90 40 60 100 80 30 90 60 60 50M0 380l60 10 60 100 10 60M315 420l-50 100-30 110-60 60-60 120M510 490l-20 120-40 80-30 80-60 80-80 100-20 50M510 490l60-80 60-100 50-130 20-90M920 460l10-180 60-80 20-90M1080 160l40-60 30-20 80 20 100-50M1370 460l-80 120 10 60-30 30M90 1000l-10-150M1170 960l60-60" />
        <path d="M370 48l180 100 60 50 110 20 50 50 10 80-30 80M720 150l220 100M0 500l500 490" fill="none" stroke="#c6c6c8" strokeWidth="4" />
        <path d="M650 440v130l-20 200M380 120v200l-30 100M1200 160l-60 280M1180 120l60 100M1100 580l-80 160M980 360l40-60M780 300l120 30 170 30M780 750l-40 160M860 600l60 60M1050 380l280 130M250 640l110 40M480 620h60M640 660l90-30M880 850l-60 60" fill="none" stroke="#dad6cc" strokeWidth="3" />
        <Road kind="main" d="M0 95l130-47M0 780l60 25 100 40 90 30 90 25 130 28 100 25 60 25 70 30" />
      </g>

      <Labels items={WEST} ox={440} sx={1 / 3} />
      <Labels items={CENTER} ox={900} sx={1 / 3} />
      <Labels items={EAST} ox={1380} sx={0.34437} />
      <text x="1172" y="448" textAnchor="middle" fontFamily="Roboto, sans-serif" fontSize="14" fontWeight="500" fill="#222">Semarang</text>
      <path d="M1152.500 400.500c-11 0-19.500 8.500-19.500 19.500 0 14 19.500 34 19.500 34s19.500-20 19.500-34c0-11-8.500-19.500-19.500-19.500zm0 13.500a6.500 6.500 0 1 1 0 13 6.500 6.500 0 0 1 0-13z" fill="#00bcd9" />
      <circle cx="1152.500" cy="420.500" r="6.500" fill="#f4efe4" />
    </svg>
  );
}

/* ---------- widgets ---------- */

function ResizeMark() {
  return <svg className="absolute right-[3px] bottom-[4px]" width="8" height="8" viewBox="0 0 8 8"><path d="M6.500 0v6.500H0" fill="none" stroke="#555" strokeWidth="2.500" /></svg>;
}

function Pencil() {
  return (
    <svg className="mt-[6px]" width="20" height="20" viewBox="0 0 20 20" fill="#808080">
      <path d="M0 20l1-6.200L12.800 2.800l4.500 4.500L6 18.800zM1.700 18l2.600-.8-1.800-1.900z" fillRule="evenodd" />
      <path d="M13.900 1.800l1-1a2 2 0 0 1 2.700 0l1.700 1.800a2 2 0 0 1 0 2.700l-1 1z" />
    </svg>
  );
}

function WidgetHead({ title, tracking }: { title: string; tracking: string }) {
  return (
    <div className="flex h-[43px] shrink-0 items-center pr-[18px] pl-[19px] text-[#767676]">
      <h2 className={"mr-auto font-['Lato'] text-[19px] text-[#858585] " + tracking}>{title}</h2>
      <Pencil />
      <span className="mt-[5px] ml-[26px] flex h-[17px] w-2 flex-col items-center justify-between"><i className="size-1 rounded-full bg-[#767676]" /><i className="size-1 rounded-full bg-[#767676]" /><i className="size-1 rounded-full bg-[#767676]" /></span>
    </div>
  );
}

function Gauge() {
  return (
    <svg width="360" height="235" viewBox="78 668 360 235" className="block">
      <path d="M121 858.700a137.500 138.300 0 0 1 275 0h-67a70.500 70.700 0 0 0-141 0z" fill="#ccc" />
      <path d="M121 852.500l67 3v3.200h-67z" fill="#4682b4" />
      <text x="258.500" y="858" textAnchor="middle" fontFamily="'Open Sans', sans-serif" fontWeight="700" fontSize="26.500" fill="#4682b4">1.53</text>
      <text x="154" y="875" textAnchor="middle" fontFamily="'Open Sans', sans-serif" fontWeight="600" fontSize="12" fill="#333">0</text>
      <text x="363" y="875" textAnchor="middle" fontFamily="'Open Sans', sans-serif" fontWeight="600" fontSize="12" fill="#333">100</text>
    </svg>
  );
}

function Dashboard() {
  return (
    <main className="flex w-[1801px] flex-col overflow-hidden rounded-[10px] bg-[#f1f1f1]">
      <NavBar />
      <SubBar />
      <div className="mt-[12px] grid h-[679px] grid-cols-[360px_1401px] grid-rows-[360px_278px] gap-x-[13px] gap-y-3 border-2 border-r border-dashed border-[#dbdbdb] pt-[13px] pl-[12px]">
        <section className="relative flex flex-col bg-white">
          <WidgetHead title="Quantumania" tracking="tracking-[0.8px]" />
          <div className="flex flex-1 items-center justify-center text-[17.4px] font-bold text-[#454545]"><span className="mt-[2px]">228-Quantumania</span></div>
          <ResizeMark />
        </section>
        <section className="relative bg-white">
          <WidgetHead title="Map" tracking="tracking-[0.4px]" />
          <CityMap />
          <div className="absolute right-[13px] bottom-[33px] flex w-[41px] flex-col rounded-[5px] border-2 border-[#c9c4b9] bg-white text-black">
            <span className="flex h-[37px] items-center justify-center border-b border-[#ccc]"><svg width="16" height="16" viewBox="0 0 16 16" stroke="#000" strokeWidth="2.200"><path d="M8 0v16M0 8h16" /></svg></span>
            <span className="flex h-[38px] items-center justify-center"><svg width="16" height="16" viewBox="0 0 16 16" stroke="#000" strokeWidth="2"><path d="M0 8h16" /></svg></span>
          </div>
          <span className="absolute right-0 bottom-0 h-[21px] w-[53px] bg-white/70 pl-[5px] font-['Liberation_Sans'] text-[14px] leading-[20px] text-[#0078a8]">Leaflet</span>
          <ResizeMark />
        </section>
        <section className="relative flex flex-col bg-white">
          <WidgetHead title="ultrasonic" tracking="tracking-[0.65px]" />
          <Gauge />
          <ResizeMark />
        </section>
      </div>
    </main>
  );
}

/* ---------- taskbar ---------- */

function Task({ children, active = "", dot = "" }: { children: React.ReactNode; active?: string; dot?: string }) {
  return (
    <div className={"relative mx-[2.5px] flex h-[50px] w-[50px] shrink-0 items-center justify-center rounded-md " + active}>
      {children}
      {dot && <span className={"absolute bottom-[1px] h-[4px] rounded-full " + dot} />}
    </div>
  );
}

const GREY_DOT = "w-2 bg-[#9a9a9a]";

function TaskBar() {
  return (
    <footer className="flex h-[60px] items-center border-t border-[#444541] bg-[linear-gradient(90deg,#29251b_0px,#28251b_200px,#222222_330px,#232220_400px,#2b241b_620px,#282219_820px,#1d2625_900px,#152a29_980px,#1f2726_1100px,#232323_1160px,#2b241b_1230px,#2d2618_1400px,#262422_1450px,#222222_1550px,#242322_1780px,#2b251e_1880px)] text-white">
      <svg className="mb-[3px] ml-[25px]" width="30" height="30" viewBox="0 0 31 30">
        <defs><linearGradient id="sun" x1="0" y1="0" x2="1" y2="1"><stop offset="0" stopColor="#f9b233" /><stop offset="1" stopColor="#f07c12" /></linearGradient></defs>
        <ellipse cx="15" cy="15.500" rx="13" ry="13" fill="url(#sun)" />
        <path d="M3 12a4 4 0 0 1 1-7 5 5 0 0 1 9-1 3.800 3.800 0 0 1 3 8z" fill="#bccdf6" />
        <path d="M16 28a4 4 0 0 1 0-7 5 5 0 0 1 9-1.500 4 4 0 0 1 3 8.500z" fill="#c8d6f8" />
      </svg>
      <div className="mb-[2px] ml-[9px] flex w-[326px] flex-col text-[15px] leading-5 tracking-[-0.3px]"><span>30°C</span><span className="text-[#c4c4c2]">Sebagian cerah</span></div>
      <svg width="29" height="29" viewBox="0 0 29 29"><defs><linearGradient id="win" x1="0" y1="0" x2="1" y2="1"><stop offset="0" stopColor="#7fe0ff" /><stop offset="1" stopColor="#0a94f8" /></linearGradient></defs><path d="M0 1q0-1 1-1h13v14H0zM15 0h13q1 0 1 1v13H15zM0 15h14v14H1q-1 0-1-1zM15 15h14v13q0 1-1 1H15z" fill="url(#win)" /></svg>
      <div className="mr-[2.5px] ml-[17px] flex h-10 w-[275px] items-center rounded-full border border-[#5a5650] bg-[#45413b]">
        <Line className="ml-[13px]" size={20} w={2.2} color="#ddd"><circle cx="10" cy="10" r="8" /><path d="M16 16l6 6" /></Line>
        <span className="ml-[11px] w-[196px] text-[16px] tracking-[0.1px] text-[#d0cecb]">Search</span>
        <svg width="27" height="27" viewBox="0 0 40 40"><path d="M20.500 2A18 18 0 1 1 12 36.400L2 38l1.500-9.500A18 18 0 0 1 20.500 2z" fill="#fff" stroke="#2583e8" strokeWidth="3.500" /><BingMark id="bingTask" /></svg>
      </div>
      <Task><svg width="30" height="28" viewBox="0 0 30 28"><defs><linearGradient id="tv" x1="0" y1="0" x2="1" y2="1"><stop offset="0" stopColor="#fff" /><stop offset="1" stopColor="#d8d8d8" /></linearGradient></defs><rect x="0" y="8" width="22" height="20" rx="1" fill="#6c6c6c" /><rect x="8" y="0" width="22" height="20" rx="1" fill="url(#tv)" /><path d="M8 8h14v12H8z" fill="#a9a9a9" /></svg></Task>
      <Task><span className="relative"><svg width="30" height="29" viewBox="0 0 30 29"><defs><linearGradient id="chat" x1="0" y1="0" x2="1" y2="1"><stop offset="0" stopColor="#8a8ae0" /><stop offset="1" stopColor="#5347c4" /></linearGradient></defs><path d="M15 0a14 14 0 1 1-5 27l-9 1.500 1.500-8A14 14 0 0 1 15 0z" fill="url(#chat)" /></svg><FaVideo className="absolute top-[6px] left-[7px] size-[16px]" /></span></Task>
      <Task><svg width="30" height="26" viewBox="0 0 30 26"><rect x="3" y="1" width="5" height="4" fill="#2d9be8" /><path d="M0 5q0-1.500 1.500-1.500H9L11 1h8l2 2.500h7.500Q30 3.500 30 5v18q0 2-2 2H2q-2 0-2-2z" fill="#6d757d" /><defs><linearGradient id="lens" x1="0" y1="0" x2=".6" y2="1"><stop offset="0" stopColor="#b36be8" /><stop offset="1" stopColor="#4fb4ee" /></linearGradient></defs><circle cx="15" cy="14" r="8.300" fill="#fff" /><circle cx="15" cy="14" r="6.500" fill="url(#lens)" /><circle cx="26.500" cy="8" r="1.300" fill="#cfd6da" /></svg></Task>
      <Task active="bg-white/10" dot="w-5 bg-[#4cc2ff]">
        <svg width="31" height="31" viewBox="0 0 31 31">
          <defs><linearGradient id="edgeA" x1="0" y1=".3" x2="1" y2=".4"><stop offset="0" stopColor="#2bb4e8" /><stop offset=".6" stopColor="#37cfc3" /><stop offset="1" stopColor="#6fe04a" /></linearGradient><linearGradient id="edgeB" x1="0" y1="0" x2="1" y2="1"><stop offset="0" stopColor="#1d8fe0" /><stop offset="1" stopColor="#0a4a94" /></linearGradient></defs>
          <path d="M.5 15A15 15 0 0 1 30.500 14c0 5-4 7-7.500 7-4 0-5-1.500-4.500-3 2-3 0-7-4-7.500C8 10 2 12 .5 17z" fill="url(#edgeA)" />
          <path d="M.5 16C2 11 9 9.500 13 11.500c-5 4-3 12.500 4 14.500 5 1.300 9-.5 11-2.500-4 6-9 7.500-13 7.500A15 15 0 0 1 .5 16z" fill="url(#edgeB)" />
          <circle cx="7.500" cy="23.500" r="7.300" fill="#dad9d7" /><circle cx="7.500" cy="21" r="3" fill="#8f8c88" /><path d="M2.500 28q5-6 10 0-5 4.500-10 0z" fill="#8f8c88" />
        </svg>
      </Task>
      <Task dot={GREY_DOT}>
        <span className="relative"><svg width="30" height="30" viewBox="0 0 30 30"><path d="M15 0a15 15 0 1 1-7.500 28L0 30l2-7.500A15 15 0 0 1 15 0z" fill="#fff" /><path d="M15 2.500a12.500 12.500 0 1 1-6.500 23.200L3.500 27l1.300-5A12.500 12.500 0 0 1 15 2.500z" fill="#3fc351" /><path d="M10 8q2-1.500 3 1l.7 2q0 1-1 2 2 3.700 5 4.700l1.500-1.500q1.500-.3 4 1.800-.5 4-4 4-9-1.500-11-10Q8.500 9.500 10 8z" fill="#fff" /></svg>
          <span className="absolute -top-[6px] left-[16px] flex size-5 items-center justify-center rounded-full bg-[#4cc2ff] text-[13px] text-black">5</span></span>
      </Task>
      <Task><svg width="30" height="26" viewBox="0 0 30 26"><path d="M0 2q0-2 2-2h8l3 3v4H0z" fill="#e09a0b" /><path d="M0 5q0-1 1-1h10l2-1h16q1 0 1 1v21q0 1-1 1H1q-1 0-1-1z" fill="#fdc93d" /><path d="M5 26v-5q0-2 2-2h16q2 0 2 2v5z" fill="#1877d0" /><path d="M9 22h12" stroke="#0b4e98" strokeWidth="1.200" /></svg></Task>
      <Task>
        <span className="relative h-[29px] w-[29px]"><svg width="27" height="24" viewBox="0 0 27 24"><rect width="27" height="24" fill="#47494b" /><rect width="27" height="3" fill="#2176b5" /><path d="M3 8h9M3 12h6M3 16h8" stroke="#3f7d4a" strokeWidth="1.500" /></svg>
          <svg width="0" height="0" className="absolute"><linearGradient id="py" x1="0" y1="0" x2="1" y2="1"><stop offset=".5" stopColor="#3f7fb5" /><stop offset=".5" stopColor="#ffd94a" /></linearGradient></svg>
          <FaPython className="absolute top-[8px] left-[8px] size-[22px]" fill="url(#py)" /></span>
      </Task>
      <Task><svg width="30" height="30" viewBox="0 0 30 30"><rect width="30" height="30" fill="#000" /><path d="M10 5h3.500v20H10zM16.500 5H20v20h-3.500z" fill="#b1060f" /><path d="M10 5h3.500L20 25h-3.500z" fill="#e50914" /></svg></Task>
      <Task><svg width="29" height="29" viewBox="0 0 29 29"><path d="M8 6V2.500Q8 1 9.500 1h10Q21 1 21 2.500V6" fill="none" stroke="#27a7e8" strokeWidth="2" /><path d="M0 4h29v21q0 4-4 4H4q-4 0-4-4z" fill="#f0f0f0" /><path d="M9 11h5v5H9z" fill="#f25022" /><path d="M15 11h5v5h-5z" fill="#7fba00" /><path d="M9 17h5v5H9z" fill="#00a4ef" /><path d="M15 17h5v5h-5z" fill="#ffb900" /></svg></Task>
      <Task><svg width="30" height="30" viewBox="0 0 30 30"><rect width="30" height="30" fill="#27acd9" /><path d="M10 4L6 24l16 1 1-3H10z" fill="#0c2a55" /><path d="M11 4h5v14h7v5H10z" fill="#fff" /></svg></Task>
      <Task active="bg-[#482a2c]" dot="w-2 bg-[#ff99a4]"><span className="flex size-[28px] items-center justify-center rounded-full bg-black"><FaSpotify className="size-[30px] shrink-0 text-[#1ed760]" /></span></Task>
      <Task dot={GREY_DOT}>
        <span className="relative"><svg width="30" height="30" viewBox="0 0 30 30"><circle cx="15" cy="15" r="15" fill="#fbc116" /><path d="M15 15L2 7.500A15 15 0 0 1 28 7.500H15z" fill="#e33b2e" /><path d="M2 7.500A15 15 0 0 0 15 30l6.500-11.500L15 15z" fill="#2da94f" /><circle cx="15" cy="15" r="7.300" fill="#fff" /><circle cx="15" cy="15" r="5.800" fill="#4285f4" /></svg>
          <svg className="absolute -top-[6px] left-[15px]" width="21" height="21" viewBox="0 0 21 21"><circle cx="10.500" cy="10.500" r="10.300" fill="#27191a" /><ellipse cx="8.500" cy="12.500" rx="4.500" ry="6" fill="#b98a7c" transform="rotate(20 9 12)" /><path d="M4 9q4-5 8 1l1.500 9 5-4V5L12 1 4 4z" fill="#1c1113" /></svg></span>
      </Task>
      <Task dot={GREY_DOT}><svg width="30" height="30" viewBox="0 0 30 30"><path d="M22 0l8 3.500v23L22 30 1 11.500l-.5-2L3 7.500l2 .2L22 21z" fill="#1a86cf" /><path d="M22 0v9L5 22.300l-2 .2-2.500-2 .5-2z" fill="#0b70b8" /><path d="M22 0l8 3.500v23L22 30z" fill="#2ea5ee" /></svg></Task>
      <Task dot={GREY_DOT}><svg width="30" height="30" viewBox="0 0 30 30" fill="none" stroke="#fff"><rect width="30" height="30" rx="2" fill="#2a8cf4" stroke="none" /><path d="M4.500 6h8q4 0 4 4.500t-4 4.500H6.500M12 15.500l4.500 8M4.500 23.500v-5h6" strokeWidth="3.300" /><path d="M20 5l2.500 5L25 5M20 18v-5q2.500-1.500 5 0v5M25 21h-3q-2 2 0 4h3" strokeWidth="1.300" /></svg></Task>
      <Task dot={GREY_DOT}><span className="flex size-[30px] items-center justify-center rounded-[12px] bg-[#0b5cff] font-['Inter'] text-[8px] font-semibold">zoom</span></Task>
      <Line className="ml-[26px]" size={16} w={2.6} color="#fff"><path d="M3 16.500l9-9 9 9" /></Line>
      <svg className="ml-[21px]" width="21" height="22" viewBox="0 0 21 22" fill="none" stroke="#fff" strokeWidth="1.200"><path d="M1 9a9 9 0 0 1 17-3.500M19 1v5h-5M3 21v-6h5M3 16a9 9 0 0 0 8 5" /><circle cx="15.500" cy="16" r="5" fill="#ff9500" stroke="none" /></svg>
      <svg className="ml-[23px]" width="14" height="20" viewBox="0 0 14 20" fill="none" stroke="#79c9e8" strokeWidth="1.400"><rect x="4" y="1" width="6" height="12" rx="3" /><path d="M1 9q0 6.500 6 6.500T13 9M7 15.500V20" /></svg>
      <svg className="ml-[23px]" width="20" height="15" viewBox="0 0 20 15" fill="none" stroke="#fff" strokeWidth="1.400"><path d="M.7 5.500Q10-3.500 19.300 5.500M3.500 8.500q6.500-6.500 13 0M6.300 11.200q3.700-3.800 7.400 0" /><circle cx="10" cy="13" r="1.400" fill="#fff" stroke="none" /></svg>
      <svg className="ml-[10px]" width="20" height="17" viewBox="0 0 20 17" fill="none" stroke="#fff" strokeWidth="1.200"><path d="M1 6h3.500L9 1.500v14L4.500 11H1zM12 5.500q2 3 0 6M14.500 3.500q3.500 5 0 10M17 1.500q5 7 0 14" /></svg>
      <svg className="ml-[9px]" width="22" height="17" viewBox="0 0 22 17" fill="none" stroke="#fff" strokeWidth="1.300"><path d="M8 3h8.500q2 0 2 2v7q0 2-2 2h-14q-2 0-2-2V8" /><path d="M19 7q2.500 1.500 0 4" fill="#fff" /><path d="M4 0L1 5.500h2.500L2.500 11 7 4.500H4.500L6 0z" fill="#fff" stroke="none" /><path d="M2 13V9h4v2l-2 2z" fill="#fff" stroke="none" /></svg>
      <div className="mb-[4px] ml-[16px] flex w-[81px] flex-col items-end whitespace-nowrap text-[15px] leading-5 tracking-[-0.3px]"><span>17:20</span><span>21/08/2023</span></div>
      <span className="mb-px ml-[14px] flex size-5 items-center justify-center rounded-full bg-[#4cc2ff] text-[11px] text-black">1</span>
    </footer>
  );
}

export default function App() {
  return (
    <div className="flex h-[1200px] w-[1920px] flex-col overflow-hidden bg-[#202020] font-['Open_Sans',sans-serif]">
      <TitleBar />
      <ToolBar />
      <div className="mb-1 flex h-[1048px]">
        <LeftRail />
        <Dashboard />
        <RightRail />
      </div>
      <TaskBar />
    </div>
  );
}
